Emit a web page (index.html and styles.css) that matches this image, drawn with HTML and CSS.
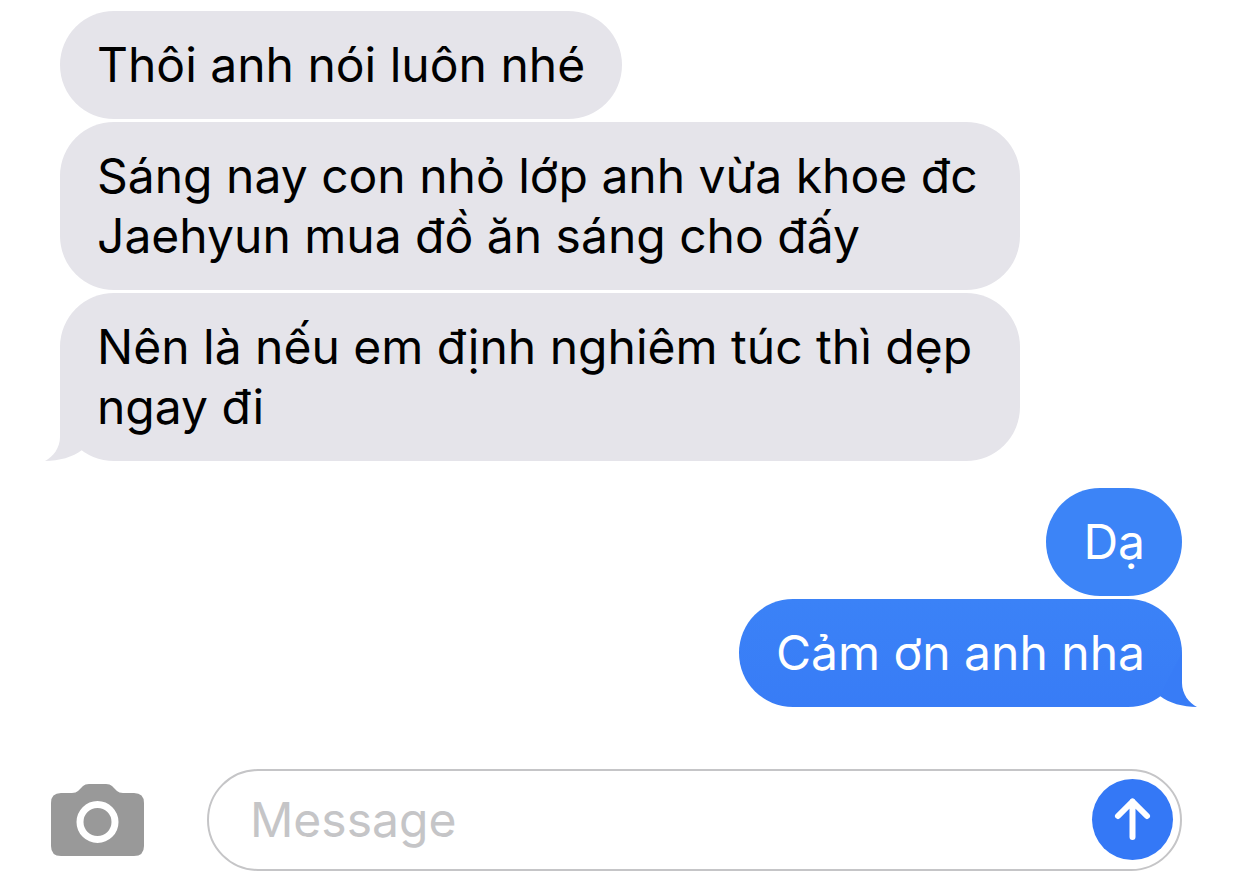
FILE: index.html
```html
<!DOCTYPE html>
<html lang="vi">

<head>
    <meta charset="UTF-8">
    <meta name="viewport" content="width=device-width, initial-scale=1.0">
    <title>Messages</title>
    <link rel="stylesheet" href="styles.css">
</head>

<body>
    <main class="chat">
        <p class="bubble received">Thôi anh nói luôn nhé</p>
        <p class="bubble received">Sáng nay con nhỏ lớp anh vừa khoe đc Jaehyun mua đồ ăn sáng cho đấy</p>
        <p class="bubble received last">Nên là nếu em định nghiêm túc thì dẹp ngay đi
            <svg class="tail" viewBox="0 0 40 54" aria-hidden="true">
                <path d="M15 0V30C15 41 8 50 0 54C14 54 28 50 37 43Z" />
            </svg>
        </p>
        <p class="bubble sent">Dạ</p>
        <p class="bubble sent last">Cảm ơn anh nha
            <svg class="tail" viewBox="0 0 40 54" aria-hidden="true">
                <path d="M25 0V30C25 41 32 50 40 54C26 54 12 50 3 43Z" />
            </svg>
        </p>
    </main>

    <form class="composer">
        <button type="button" class="camera" aria-label="Camera">
            <svg viewBox="0 0 93 73" aria-hidden="true">
                <path class="body" d="M10 9H21Q25 9 27 7L32 2Q34 0 38 0H55Q59 0 61 2L66 7Q68 9 72 9H83Q93 9 93 19V62Q93 72 83 72H10Q0 72 0 62V19Q0 9 10 9Z" />
                <circle class="lens" cx="46.500" cy="38" r="17.500" />
            </svg>
        </button>
        <div class="field">
            <input type="text" name="message" placeholder="Message" aria-label="Message">
            <button type="submit" class="send" aria-label="Send">
                <svg viewBox="0 0 81 81" aria-hidden="true">
                    <path d="M40.500 58V22.500M26 37L40.500 22.500L55 37" />
                </svg>
            </button>
        </div>
    </form>
</body>

</html>
```
FILE: styles.css
```css
* {
    box-sizing: border-box;
}

body {
    margin: 0;
    background-color: #fff;
    font-family: Inter, "Noto Sans", sans-serif;
}

.chat {
    display: flex;
    flex-direction: column;
    align-items: flex-start;
    gap: 3px;
    padding: 11px 60px 0;
}

.bubble {
    position: relative;
    max-width: 960px;
    margin: 0;
    padding: 24px 37px;
    border-radius: 54px;
    font-size: 48px;
    line-height: 60px;
}

.received {
    background-color: #e5e4ea;
    color: #000;
}

.sent {
    align-self: flex-end;
    background-color: #3c84f7;
    color: #fff;
}

.received + .sent {
    margin-top: 24px;
}

.sent.last {
    background-image: linear-gradient(#3b82f7, #387cf6);
}

.tail {
    position: absolute;
    bottom: 0;
    width: 40px;
    height: 54px;
}

.received .tail {
    left: -15px;
    fill: #e5e4ea;
}

.sent .tail {
    right: -15px;
    fill: #387cf6;
}

.composer {
    display: flex;
    align-items: center;
    gap: 63px;
    margin-top: 62px;
    padding: 0 60px 0 51px;
}

button {
    padding: 0;
    border: none;
    background: none;
    cursor: pointer;
}

button svg {
    display: block;
    width: 100%;
}

.camera {
    flex: none;
    width: 93px;
}

.camera .body {
    fill: #999;
}

.camera .lens {
    fill: none;
    stroke: #fff;
    stroke-width: 7;
}

.field {
    display: flex;
    flex: 1;
    align-items: center;
    padding: 8px 7px 9px 41px;
    border: 2px solid #c5c5c7;
    border-radius: 51px;
}

.field input {
    flex: 1;
    min-width: 0;
    padding: 0;
    border: none;
    outline: none;
    background: none;
    font-family: inherit;
    font-size: 48px;
    line-height: 60px;
}

.field input::placeholder {
    color: #c5c5c7;
    opacity: 1;
}

.send {
    flex: none;
    width: 81px;
    height: 81px;
    border-radius: 50%;
    background-color: #3478f6;
}

.send path {
    fill: none;
    stroke: #fff;
    stroke-width: 6;
    stroke-linecap: round;
    stroke-linejoin: round;
}
```
